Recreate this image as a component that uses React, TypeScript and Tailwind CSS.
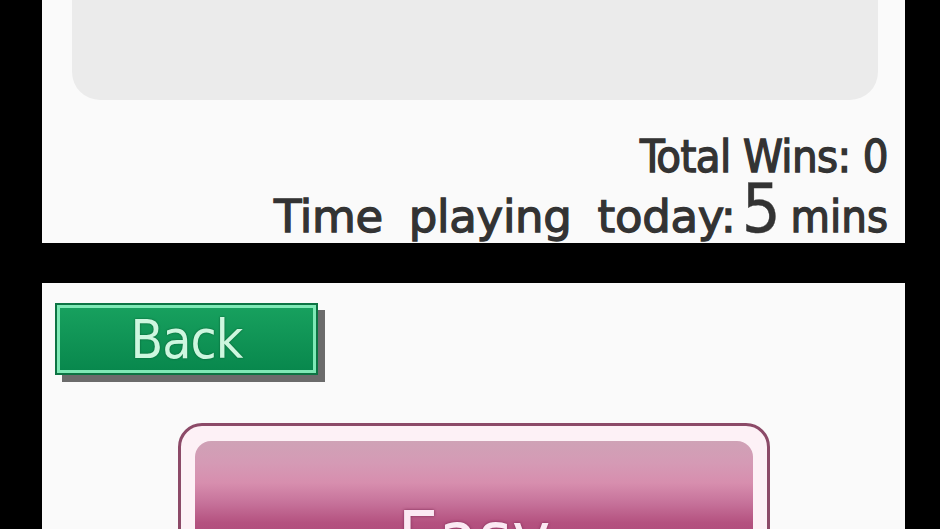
export default function App() {
  const font = { fontFamily: '"DejaVu Sans Condensed", "DejaVu Sans", sans-serif' }
  const wide = { fontFamily: '"DejaVu Sans", sans-serif' }
  return (
    <div className="w-[940px] h-[529px] overflow-hidden bg-black flex flex-col pl-[42px] pr-[35px]" style={font}>
      {/* Top screen */}
      <div className="h-[243px] shrink-0 bg-[#fafafa] flex flex-col">
        <div className="ml-[30px] mr-[27px] h-[104px] rounded-b-[28px] bg-[#ebebeb]" />
        <div className="flex flex-col items-end pr-[17px] mt-[36px] text-[#333333]">
          <div className="text-[45px] leading-[42px] tracking-[-0.6px] [-webkit-text-stroke:1.3px_#333333]">Total Wins: 0</div>
          <div className="flex items-baseline leading-none mt-[-3px]">
            <span className="text-[45px] tracking-[-0.3px] [word-spacing:12px] [-webkit-text-stroke:1.3px_#333333]" style={wide}>Time playing today:</span>
            <span className="text-[68px] ml-[6px] mr-[10px] [-webkit-text-stroke:0.4px_#333333]">5</span>
            <span className="text-[45px] [-webkit-text-stroke:1.3px_#333333]">mins</span>
          </div>
        </div>
      </div>

      {/* Gap between screens */}
      <div className="h-[40px] shrink-0" />

      {/* Bottom screen */}
      <div className="flex-1 bg-[#fafafa] flex flex-col pt-[20px] pl-[13px]">
        <button className="w-[263px] h-[72px] shrink-0 bg-[#0c7443] p-[2px] shadow-[7px_7px_0_#6b6b6b]">
          <div className="w-full h-full border-[3px] border-[#7fe9b6] bg-gradient-to-b from-[#17a05e] to-[#08884d] flex items-center justify-center">
            <span className="text-[53px] leading-none tracking-[-1px] text-[#cdf7df] [text-shadow:0_0_2px_#05552c]">Back</span>
          </div>
        </button>

        <div className="ml-[123px] mt-[48px] w-[592px] shrink-0 rounded-[24px] border-[3px] border-[#8c4a68] bg-[#fdf1f6] pt-[15px] px-[14px]">
          <div className="h-[150px] rounded-[16px] bg-[linear-gradient(to_bottom,#cfa2b6_0px,#d59ab5_22px,#d78eae_42px,#c6729a_62px,#b4517f_82px,#aa4477_110px)] flex justify-center pt-[60px]">
            <span className="text-[72px] leading-none text-[#fbe9f3] [text-shadow:0_0_3px_#7a2a52]">Easy</span>
          </div>
        </div>
      </div>
    </div>
  )
}
